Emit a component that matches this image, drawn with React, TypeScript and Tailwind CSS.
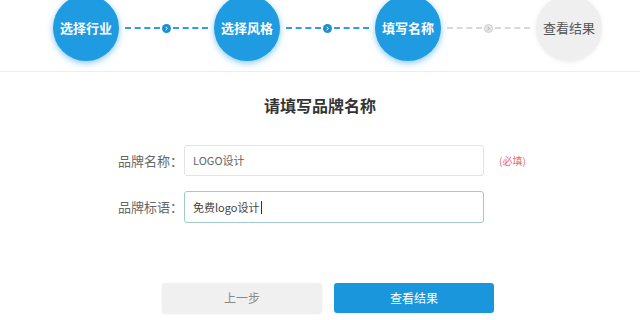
import React from "react";

const FONT = { fontFamily: '"Noto Sans CJK SC", "Noto Sans", sans-serif' };

function StepCircle({ label, active }: { label: string; active: boolean }) {
  return (
    <div
      className={
        active
          ? "flex h-[66px] w-[66px] flex-none items-center justify-center rounded-full bg-[#1f9be2] text-[13px] font-bold text-white shadow-[0_2px_6px_rgba(30,155,226,0.55)]"
          : "flex h-[66px] w-[66px] flex-none items-center justify-center rounded-full bg-[#efefef] text-[13px] text-[#555] shadow-[0_1px_4px_rgba(0,0,0,0.08)]"
      }
    >
      {label}
    </div>
  );
}

function Connector({ active }: { active: boolean }) {
  const dash = active ? "border-[#2a9fe3]" : "border-[#d8d8d8]";
  return (
    <div className="flex w-[95px] flex-none items-center px-[6px]">
      <div className={`flex-1 border-t-2 border-dashed ${dash}`} />
      <div
        className={
          active
            ? "mx-[2px] flex h-[9px] w-[9px] items-center justify-center rounded-full bg-[#1f8fd0]"
            : "mx-[2px] flex h-[9px] w-[9px] items-center justify-center rounded-full border border-[#cfcfcf] bg-[#e6e6e6]"
        }
      >
        <svg width="5" height="5" viewBox="0 0 6 6">
          <path
            d="M2 1 L4 3 L2 5"
            fill="none"
            stroke={active ? "#fff" : "#aaa"}
            strokeWidth="1.2"
          />
        </svg>
      </div>
      <div className={`flex-1 border-t-2 border-dashed ${dash}`} />
    </div>
  );
}

export default function App() {
  return (
    <div className="h-[320px] w-[640px] overflow-hidden bg-white" style={FONT}>
      {/* steps */}
      <div className="h-[77px] border-b border-[#eeeeee]">
        <div className="-mt-[5px] flex items-center pl-[53px]">
          <StepCircle label="选择行业" active />
          <Connector active />
          <StepCircle label="选择风格" active />
          <Connector active />
          <StepCircle label="填写名称" active />
          <Connector active={false} />
          <StepCircle label="查看结果" active={false} />
        </div>
      </div>

      {/* form */}
      <div className="flex flex-col items-center pt-[22px]">
        <h2 className="text-[16px] font-bold leading-[22px] text-[#333]">请填写品牌名称</h2>
      </div>

      <div className="mt-[29px] flex flex-col gap-[15px] pl-[118px]">
        <div className="flex items-center">
          <span className="w-[66px] text-[13px] text-[#666]">品牌名称：</span>
          <div className="flex h-[31px] w-[300px] items-center rounded-[3px] border border-[#e3e3e3] px-[8px] text-[11px] text-[#666]">
            LOGO设计
          </div>
          <span className="ml-[15px] text-[10px] text-[#e8686a]">(必填)</span>
        </div>
        <div className="flex items-center">
          <span className="w-[66px] text-[13px] text-[#666]">品牌标语：</span>
          <div className="flex h-[32px] w-[300px] items-center rounded-[3px] border border-[#9fc9cc] px-[8px] text-[11px] text-[#444]">
            免费logo设计
            <span className="ml-[1px] h-[13px] w-px bg-[#333]" />
          </div>
        </div>
      </div>

      <div className="mt-[60px] flex gap-[12px] pl-[162px]">
        <button className="h-[30px] w-[160px] rounded-[3px] bg-[#f0f0f0] text-[12px] text-[#888] shadow-[0_1px_2px_rgba(0,0,0,0.08)]">
          上一步
        </button>
        <button className="h-[30px] w-[160px] rounded-[3px] bg-[#1a96dc] text-[12px] text-white">
          查看结果
        </button>
      </div>
    </div>
  );
}
